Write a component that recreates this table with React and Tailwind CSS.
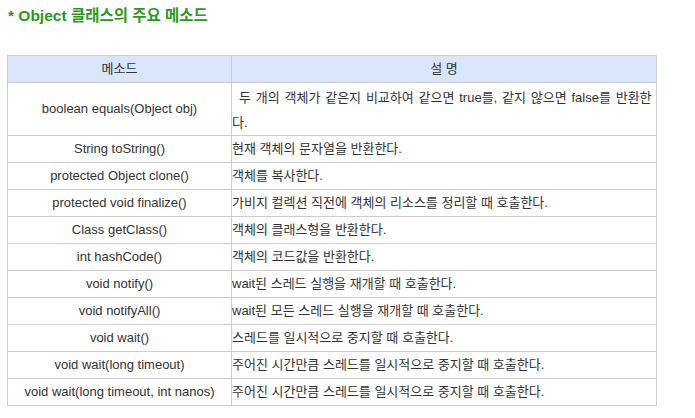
import React from 'react';

const METHODS = [
  ['String toString()', '현재 객체의 문자열을 반환한다.'],
  ['protected Object clone()', '객체를 복사한다.'],
  ['protected void finalize()', '가비지 컬렉션 직전에 객체의 리소스를 정리할 때 호출한다.'],
  ['Class getClass()', '객체의 클래스형을 반환한다.'],
  ['int hashCode()', '객체의 코드값을 반환한다.'],
  ['void notify()', 'wait된 스레드 실행을 재개할 때 호출한다.'],
  ['void notifyAll()', 'wait된 모든 스레드 실행을 재개할 때 호출한다.'],
  ['void wait()', '스레드를 일시적으로 중지할 때 호출한다.'],
  ['void wait(long timeout)', '주어진 시간만큼 스레드를 일시적으로 중지할 때 호출한다.'],
  ['void wait(long timeout, int nanos)', '주어진 시간만큼 스레드를 일시적으로 중지할 때 호출한다.'],
];

const font = "font-['Liberation_Sans','Noto_Sans_CJK_KR',sans-serif]";

export default function App() {
  return (
    <div className={`w-[695px] h-[418px] bg-white overflow-hidden ${font}`}>
      <div className="pl-[8px] pt-[6px] text-[15.5px] leading-[20px] font-bold text-[#2b9a1c]">* Object 클래스의 주요 메소드</div>
      <table className="ml-[7px] mt-[29px] w-[650px] table-fixed border-collapse text-[13px] text-[#333]">
        <thead>
          <tr className="h-[27px] bg-[#d9e5fb]">
            <th className="w-[224px] border border-[#cccccc] font-normal text-center p-0">메소드</th>
            <th className="border border-[#cccccc] font-normal text-center p-0">설 명</th>
          </tr>
        </thead>
        <tbody>
          <tr className="h-[53px]">
            <td className="border border-[#cccccc] text-center p-0">boolean equals(Object obj)</td>
            <td className="border border-[#cccccc] p-0 leading-[25px] pt-[1px] whitespace-nowrap overflow-hidden">
              <span className="pl-[7px] [word-spacing:1.2px]">두 개의 객체가 같은지 비교하여 같으면 true를, 같지 않으면 false를 반환한</span>
              <br />다.
            </td>
          </tr>
          {METHODS.map(([m, d]) => (
            <tr key={m} className="h-[27px]">
              <td className="border border-[#cccccc] text-center p-0 whitespace-nowrap">{m}</td>
              <td className="border border-[#cccccc] p-0 whitespace-nowrap">{d}</td>
            </tr>
          ))}
        </tbody>
      </table>
    </div>
  );
}
